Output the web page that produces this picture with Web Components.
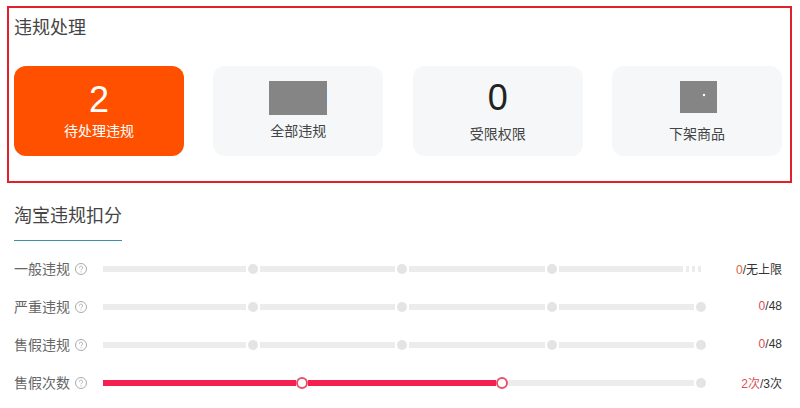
<!DOCTYPE html>
<html>
<head>
<meta charset="utf-8">
<style>
  html, body { margin: 0; background: #fff; overflow: hidden; }
  body { font-family: "Liberation Sans", "Noto Sans CJK SC", sans-serif; color: #333; }
</style>
</head>
<body>
<violation-panel>
  <stat-card active label="待处理违规" gap="0" top="13"><span class="num">2</span></stat-card>
  <stat-card label="全部违规" gap="6" top="15"><mask-block w="58" h="34" mark="sliver"></mask-block></stat-card>
  <stat-card label="受限权限" gap="5" top="11"><span class="num">0</span></stat-card>
  <stat-card label="下架商品" gap="11" top="15"><mask-block w="37" h="32" mark="dot" shift="3"></mask-block></stat-card>
</violation-panel>
<score-section>
  <score-row label="一般违规" used="0" total="无上限" used-color="#d4683f" kind="open"></score-row>
  <score-row label="严重违规" used="0" total="48" kind="closed"></score-row>
  <score-row label="售假违规" used="0" total="48" kind="closed"></score-row>
  <score-row label="售假次数" used="2次" total="3次" kind="fake"></score-row>
</score-section>

<script>
//recuadro rojo de arriba
class ViolationPanel extends HTMLElement {
  constructor() {
    super();
    this.attachShadow({ mode: "open" });
    this.shadowRoot.innerHTML = `
      <style>
        :host { display: block; box-sizing: border-box; width: 785px; height: 177px; margin: 6px 0 0 7px;
                border: 2px solid #e2202c; padding: 8px 8px 0 5px; }
        h2 { margin: 0; font-size: 18px; line-height: 24px; font-weight: 400; color: #444; }
        .cards { display: grid; grid-template-columns: repeat(4, 170px); justify-content: space-between; margin-top: 26px; }
      </style>
      <h2>违规处理</h2>
      <div class="cards"><slot></slot></div>`;
  }
}
customElements.define("violation-panel", ViolationPanel);

//tarjeta con numero o bloque gris
class StatCard extends HTMLElement {
  constructor() {
    super();
    this.attachShadow({ mode: "open" });
    this.shadowRoot.innerHTML = `
      <style>
        :host { display: flex; flex-direction: column; align-items: center; box-sizing: border-box; height: 90px;
                border-radius: 12px; background: #f6f7f9; color: #444; }
        :host([active]) { background: #ff5000; color: #fff; }
        .value { display: flex; justify-content: center; font-size: 36px; line-height: 42px; color: #222; }
        :host([active]) .value { color: #fff; }
        .label { font-size: 14px; line-height: 20px; }
      </style>
      <div class="value"><slot></slot></div>
      <div class="label"></div>`;
    const value = this.shadowRoot.querySelector(".value");
    this.shadowRoot.querySelector(".label").textContent = this.getAttribute("label");
    this.style.paddingTop = this.getAttribute("top") + "px";
    value.style.marginBottom = this.getAttribute("gap") + "px";
    if (this.querySelector("mask-block")) value.style.lineHeight = "0";
  }
}
customElements.define("stat-card", StatCard);

//bloque gris que tapa la cifra en la captura
class MaskBlock extends HTMLElement {
  constructor() {
    super();
    this.attachShadow({ mode: "open" });
    const mark = this.getAttribute("mark");
    const w = this.getAttribute("w"), h = this.getAttribute("h");
    this.shadowRoot.innerHTML = `
      <style>
        :host { display: block; width: ${w}px; height: ${h}px; margin-left: ${this.getAttribute("shift") || 0}px; }
        svg { display: block; }
      </style>
      <svg width="${w}" height="${h}">
        <rect width="100%" height="100%" fill="#858585"/>
        ${mark === "sliver" ? `<path d="M57 10q2 5 0 11z" fill="#4f93c9"/>` : `<circle cx="24" cy="14" r="1.2" fill="#fff"/>`}
      </svg>`;
  }
}
customElements.define("mask-block", MaskBlock);

//seccion de abajo
class ScoreSection extends HTMLElement {
  constructor() {
    super();
    this.attachShadow({ mode: "open" });
    this.shadowRoot.innerHTML = `
      <style>
        :host { display: block; padding: 21px 18px 0 14px; }
        h2 { display: inline-block; margin: 0 0 8px; padding-bottom: 12px; border-bottom: 1px solid #3f8fb0;
             font-size: 18px; line-height: 24px; font-weight: 400; color: #444; vertical-align: top; }
        .rows { display: block; }
      </style>
      <div><h2>淘宝违规扣分</h2></div>
      <div class="rows"><slot></slot></div>`;
  }
}
customElements.define("score-section", ScoreSection);

//fila: etiqueta, barra y valor
class ScoreRow extends HTMLElement {
  constructor() {
    super();
    this.attachShadow({ mode: "open" });
    const kind = this.getAttribute("kind");
    const seg = (w, c) => `<i class="seg${c ? " " + c : ""}" style="width:${w}px"></i>`;
    const dot = `<i class="dot"></i>`;
    let track;
    if (kind === "fake") {
      track = seg(193, "hot") + `<i class="knob"></i>` + seg(188, "hot") + `<i class="knob"></i>` + seg(186) + `<i class="dot end"></i>`;
    } else {
      const last = kind === "open"
        ? seg(124) + `<i class="seg dash"></i><i class="seg dash"></i><i class="seg dash"></i>`
        : seg(135) + dot;
      track = seg(143) + dot + seg(135) + dot + seg(136) + dot + last;
    }
    this.shadowRoot.innerHTML = `
      <style>
        :host { display: flex; align-items: center; height: 38px; font-size: 14px; color: #666; }
        .label { width: 56px; white-space: nowrap; }
        svg { display: block; margin: 2px 16px 0 5px; flex: none; }
        .track { display: flex; align-items: center; gap: 2px; width: 603px; flex: none; margin-top: 2px; }
        .track.fake { gap: 0; }
        .seg { display: block; height: 6px; background: #ececec; flex: none; }
        .dot { display: block; width: 10px; height: 10px; border-radius: 50%; background: #e4e4e4; flex: none; }
        .dot.end { margin-left: 2px; }
        .dash { width: 3px; margin-left: 1px; }
        .hot { background: #f5204f; }
        .knob { display: block; box-sizing: border-box; width: 12px; height: 12px; border-radius: 50%;
                background: #fff; border: 2px solid #e8506c; flex: none; }
        .value { flex: 1; text-align: right; font-size: 12px; color: #333; white-space: nowrap; }
        .value b { font-weight: 400; color: #d9505a; }
      </style>
      <span class="label"></span>
      <svg width="12" height="12" viewBox="0 0 12 12" fill="none" stroke="#aaa">
        <circle cx="6" cy="6" r="5.5"/>
        <path d="M4.4 4.8a1.6 1.6 0 1 1 2.4 1.3c-.5.3-.8.6-.8 1.2" stroke-width=".9"/>
        <path d="M6 8.4v1" stroke-width=".9"/>
      </svg>
      <div class="track ${kind}">${track}</div>
      <div class="value"><b></b>/<span></span></div>`;
    this.shadowRoot.querySelector(".label").textContent = this.getAttribute("label");
    const used = this.shadowRoot.querySelector("b");
    used.textContent = this.getAttribute("used");
    if (this.getAttribute("used-color")) used.style.color = this.getAttribute("used-color");
    this.shadowRoot.querySelector(".value span").textContent = this.getAttribute("total");
  }
}
customElements.define("score-row", ScoreRow);
</script>
</body>
</html>
